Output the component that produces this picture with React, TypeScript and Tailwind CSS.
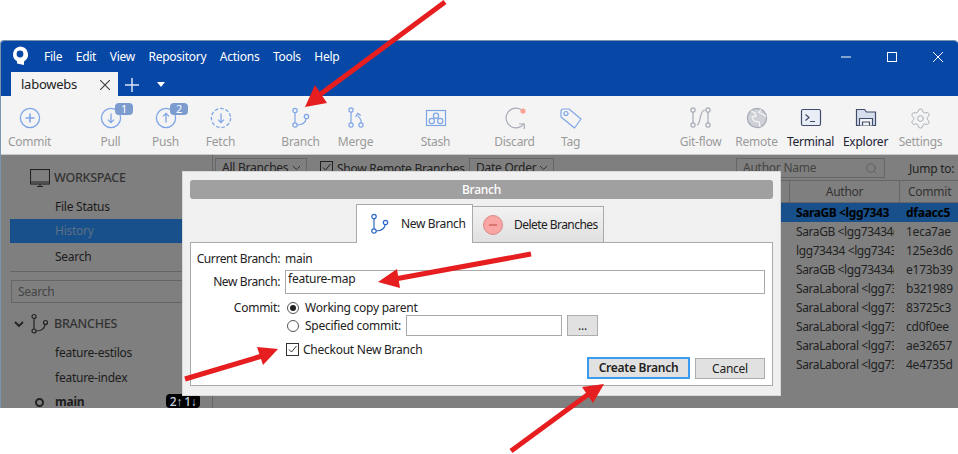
import { Search, Settings } from "lucide-react"

const blue = "#7ea6e6"
const grey = "#a6abb6"

function Logo() {
  return (
    <svg className="-mt-[1px]" width="18" height="20" viewBox="0 0 18 20">
      <path d="M9 0.5a8 8 0 0 1 4 14.9V19l-7 -1.5v-2.2A8 8 0 0 1 9 0.5z" fill="#fff" />
      <circle cx="9" cy="8" r="3.4" fill="#0747a6" />
    </svg>
  )
}

function BranchIcon({ color }: { color: string }) {
  return (
    <svg width="32" height="32" viewBox="0 0 32 32" fill="none" stroke={color} strokeWidth="1.2">
      <circle cx="10" cy="8.5" r="2.2" />
      <circle cx="10" cy="23" r="2.2" />
      <circle cx="21.5" cy="14.5" r="2.2" />
      <path d="M10 10.7V20.8M12.2 23C17 23 20.5 20.5 21.2 16.7" />
    </svg>
  )
}

function CircleIcon({ kind }: { kind: "plus" | "down" | "up" | "dash" }) {
  return (
    <svg width="32" height="32" viewBox="0 0 32 32" fill="none" stroke={blue} strokeWidth="1.3">
      <circle cx="16" cy="16" r="9.6" strokeDasharray={kind === "dash" ? "3.6 1.9" : undefined} />
      {kind === "plus" && <path d="M16 11.5v9M11.5 16h9" strokeWidth="1.6" />}
      {(kind === "down" || kind === "dash") && <path d="M16 11.5v9M13 17.6l3 3 3-3" />}
      {kind === "up" && <path d="M16 20.5v-9M13 14.4l3-3 3 3" />}
    </svg>
  )
}

function MergeIcon() {
  return (
    <svg width="32" height="32" viewBox="0 0 32 32" fill="none" stroke={blue} strokeWidth="1.2">
      <circle cx="11" cy="8" r="2.1" />
      <circle cx="11" cy="23" r="2.1" />
      <circle cx="21" cy="23" r="2.1" />
      <path d="M11 10.1v10.8M21 20.9v-2.4C21 16.5 18.5 16 18 13.5" />
      <path d="M15.6 15l2.2-3.6 3 2.2" />
    </svg>
  )
}

function StashIcon() {
  return (
    <svg width="32" height="32" viewBox="0 0 32 32" fill="none" stroke={blue} strokeWidth="1.2">
      <rect x="6.5" y="8.5" width="19" height="15" />
      <circle cx="16" cy="13.7" r="2.6" />
      <circle cx="11.8" cy="19" r="2.6" />
      <circle cx="20.2" cy="19" r="2.6" />
    </svg>
  )
}

function DiscardIcon() {
  return (
    <svg width="32" height="32" viewBox="0 0 32 32" fill="none" stroke={grey} strokeWidth="1.2">
      <path d="M22 7.6A9.8 9.8 0 1 0 25 21.5" />
      <path d="M20 22h5.3v5" />
      <circle cx="24" cy="9" r="2.6" fill="#f9a294" stroke="none" />
    </svg>
  )
}

function TagIcon() {
  return (
    <svg width="32" height="32" viewBox="0 0 32 32" fill="none" stroke={blue} strokeWidth="1.2">
      <path d="M6 9.5C6 8 7 7 8.5 7H14L26 17l-6.5 9L6 15z" strokeLinejoin="round" />
      <circle cx="11" cy="11.5" r="2" />
    </svg>
  )
}

function GitFlowIcon() {
  return (
    <svg width="32" height="32" viewBox="0 0 32 32" fill="none" stroke={grey} strokeWidth="1.2">
      <circle cx="8" cy="8" r="2.1" />
      <circle cx="8" cy="23" r="2.1" />
      <circle cx="23" cy="8" r="2.1" />
      <circle cx="23" cy="23" r="2.1" />
      <path d="M8 10.1v10.8M23 10.1v10.8M12 23c4 0 2-15 8-15" />
    </svg>
  )
}

function GlobeIcon() {
  return (
    <svg width="32" height="32" viewBox="0 0 32 32" fill="#cdd0d6" stroke={grey} strokeWidth="1.2">
      <circle cx="16" cy="16" r="9.6" />
      <path d="M10 9l4 2 1 3-4 1 2 4 5 1 1 5M20 7.5l-2 3 4 2 3 2" fill="none" stroke="#f4f4f4" strokeWidth="1.3" />
    </svg>
  )
}

function TerminalIcon() {
  return (
    <svg width="32" height="32" viewBox="0 0 32 32" fill="none" stroke="#3f4c6b" strokeWidth="1.2">
      <rect x="6.5" y="7.5" width="19" height="16" rx="1.5" fill="#e9edf5" />
      <path d="M10.5 12.5l3.5 3-3.5 3M15 19.5h5" />
    </svg>
  )
}

function ExplorerIcon() {
  return (
    <svg width="32" height="32" viewBox="0 0 32 32" fill="none" stroke="#3f4c6b" strokeWidth="1.2">
      <path d="M6.5 23.5v-16h8l2 2.5h9v13.5z" fill="#d7deeb" />
      <path d="M9.5 23.5v-7h13v7" fill="#f4f4f4" />
      <path d="M12.5 23.5v-3.5h7v3.5" />
    </svg>
  )
}

function ToolItem({ label, dark, badge, className, children }: { label: string; dark?: boolean; badge?: string; className?: string; children: React.ReactNode }) {
  return (
    <div className={`relative flex w-[55px] shrink-0 flex-col items-center pt-[6px] ${className ?? ""}`}>
      <div className="flex h-[32px] items-center justify-center">{children}</div>
      {badge && (
        <span className="absolute left-[32px] top-[7px] flex h-[12px] w-[18px] items-center justify-center rounded-[4px] bg-[#7c9bce] text-[11px] text-white">
          {badge}
        </span>
      )}
      <span className={`whitespace-nowrap text-[12px] leading-[16px] ${dark ? "text-[#1d2233]" : "text-[#9a9a9a]"}`}>{label}</span>
    </div>
  )
}

function Combo({ label, className }: { label: string; className: string }) {
  return (
    <div className={`flex h-[20px] items-center justify-between whitespace-nowrap border border-[#666] pl-[6px] pr-[5px] text-[12px] text-[#222] ${className}`}>
      <span>{label}</span>
      <svg width="9" height="6" viewBox="0 0 9 6" fill="none" stroke="#333"><path d="M1 1l3.5 3.5L8 1" /></svg>
    </div>
  )
}

const rows = [
  ["SaraGB <lgg7343", "dfaacc5"],
  ["SaraGB <lgg73434(", "1eca7ae"],
  ["lgg73434 <lgg7343", "125e3d6"],
  ["SaraGB <lgg73434(", "e173b39"],
  ["SaraLaboral <lgg73", "b321989"],
  ["SaraLaboral <lgg73", "83725c3"],
  ["SaraLaboral <lgg73", "cd0f0ee"],
  ["SaraLaboral <lgg73", "ae32657"],
  ["SaraLaboral <lgg73", "4e4735d"],
]

function Sidebar() {
  return (
    <aside className="flex w-[211px] shrink-0 flex-col pl-[9px] text-[12px] text-[#1c1c1c]">
      <div className="flex h-[44px] shrink-0 items-center gap-[4px] pl-[20px] pt-[2px]">
        <svg width="20" height="19" viewBox="0 0 20 19" fill="none" stroke="#222" strokeWidth="1.1">
          <rect x="0.5" y="0.5" width="19" height="14.5" />
          <path d="M0.5 13h19M7 17.5h6M10 15v2.5" />
        </svg>
        <span className="text-[12.5px] font-medium text-[#333]">WORKSPACE</span>
      </div>
      <div className="flex h-[16px] shrink-0 items-center pl-[45px]">File Status</div>
      <div className="mt-[4px] flex h-[24px] shrink-0 items-center bg-[#17508a] pl-[45px] text-[#5c6f85]">History</div>
      <div className="flex h-[27px] shrink-0 items-center pl-[45px]">Search</div>
      <div className="mt-[1px] h-px shrink-0 bg-[#666]" />
      <div className="ml-[1px] mt-[8px] flex h-[23px] shrink-0 items-center justify-between border border-[#666] pl-[6px] pr-[6px] text-[#444]">
        Search
        <Search size={13} strokeWidth={1.2} color="#555" />
      </div>
      <div className="mt-[9px] flex h-[24px] shrink-0 items-center">
        <span className="w-[16px] shrink-0 pl-[4px]">
          <svg width="10" height="7" viewBox="0 0 10 7" fill="none" stroke="#222" strokeWidth="1.8">
            <path d="M1 1l4 4 4-4" />
          </svg>
        </span>
        <svg className="ml-[3px]" width="24" height="24" viewBox="5 4 24 24" fill="none" stroke="#222" strokeWidth="1.2">
          <circle cx="10" cy="8.5" r="2" />
          <circle cx="10" cy="23" r="2" />
          <circle cx="21.5" cy="14.5" r="2" />
          <path d="M10 10.5V21M12 23C17 23 20.5 20.5 21.2 16.5" />
        </svg>
        <span className="ml-[1px] text-[12.5px] font-medium text-[#333]">BRANCHES</span>
      </div>
      <div className="mt-[4px] flex h-[25px] shrink-0 items-center pl-[45px]">feature-estilos</div>
      <div className="flex h-[25px] shrink-0 items-center pl-[45px]">feature-index</div>
      <div className="relative flex h-[18px] shrink-0 items-center pl-[45px] pt-[6px] font-bold">
        <span className="absolute left-[25px] top-[8px] h-[9px] w-[9px] rounded-full border-2 border-[#222]" />
        main
        <span className="absolute left-[156px] top-[4px] flex h-[14px] w-[34px] items-end justify-center whitespace-nowrap rounded-[4px] bg-black text-[12px] font-medium leading-[12px] tracking-[-0.5px] text-[#c9d4e4]">
          2↑ 1↓
        </span>
      </div>
    </aside>
  )
}

function MainPane() {
  return (
    <main className="flex min-w-0 flex-1 flex-col border-l border-[#666] text-[12px] text-[#222]">
      <div className="flex h-[26px] shrink-0 items-start whitespace-nowrap border-b border-[#666] pt-[3px]">
        <Combo label="All Branches" className="ml-[2px] w-[92px] shrink-0" />
        <span className="ml-[13px] mt-[3px] flex h-[13px] w-[13px] shrink-0 items-center justify-center border border-[#222]">
          <svg width="11" height="11" viewBox="0 0 11 11" fill="none" stroke="#222"><path d="M2 5.5l2.5 2.5L9.5 2" /></svg>
        </span>
        <span className="ml-[4px] mt-[2px] w-[120px] shrink-0">Show Remote Branches</span>
        <Combo label="Date Order" className="ml-[12px] w-[85px] shrink-0" />
        <div className="ml-[182px] flex h-[20px] w-[149px] shrink-0 items-center justify-between border border-[#666] px-[6px] text-[#444]">
          Author Name
          <Search size={13} strokeWidth={1.2} color="#555" />
        </div>
        <span className="ml-[24px] mt-[2px]">Jump to:</span>
      </div>
      <div className="flex h-[22px] shrink-0 items-center justify-end border-b border-[#666] text-[#333]">
        <div className="flex h-full w-[110px] items-center justify-center border-l border-[#666]">Author</div>
        <div className="flex h-full w-[59px] items-center border-l border-[#666] pl-[8px]">Commit</div>
      </div>
      {rows.map(([author, commit], i) => (
        <div key={commit} className={`flex h-[19px] shrink-0 items-center justify-end ${i === 0 ? "bg-[#17508a] font-bold text-black" : ""}`}>
          <div className="w-[110px] pl-[7px] pr-[5px]">
            <div className="overflow-hidden whitespace-nowrap tracking-[-0.4px]">{author}</div>
          </div>
          <div className="w-[59px] pl-[7px]">{commit}</div>
        </div>
      ))}
    </main>
  )
}

function BranchDialog() {
  return (
    <div className="absolute left-[181px] top-[130px] flex h-[225px] w-[599px] flex-col border border-[#d8d8d8] bg-[#f0f0f0] px-[7px] pt-[8px] text-[12px] text-[#222]">
      <div className="flex h-[19px] shrink-0 items-center justify-center rounded-[3px] bg-[#a0a0a0] font-medium text-white">Branch</div>
      <div className="relative z-10 mt-[5px] flex h-[39px] shrink-0 items-end pl-[166px]">
        <div className="flex h-[39px] w-[117px] items-center border border-b-0 border-[#a9a9a9] bg-white">
          <span className="ml-[7px]">
            <BranchIcon color="#2a66c8" />
          </span>
          <span className="-mt-[1px] ml-[5px] whitespace-nowrap tracking-[-0.35px]">New Branch</span>
        </div>
        <div className="flex h-[37px] w-[131px] items-center border border-l-0 border-[#a9a9a9] bg-gradient-to-b from-[#f2f2f2] to-[#e0e0e0]">
          <span className="ml-[10px] flex h-[20px] w-[20px] shrink-0 items-center justify-center rounded-full border border-[#d98a86] bg-[#f9a5a3]">
            <span className="h-[2px] w-[8px] bg-[#d9756f]" />
          </span>
          <span className="ml-[11px] whitespace-nowrap tracking-[-0.55px]">Delete Branches</span>
        </div>
      </div>
      <div className="-mt-px flex h-[144px] flex-col border border-[#a9a9a9] bg-white pr-[7px]">
        <div className="mt-[8px] flex h-[16px] shrink-0 items-center">
          <span className="w-[89px] text-right tracking-[-0.4px]">Current Branch:</span>
          <span className="ml-[5px]">main</span>
        </div>
        <div className="mt-[3px] flex h-[24px] shrink-0 items-center">
          <span className="w-[89px] text-right tracking-[-0.4px]">New Branch:</span>
          <div className="ml-[5px] h-[24px] flex-1 border border-[#a9a9a9] pl-[2px] leading-[16px]">feature-map</div>
        </div>
        <div className="mt-[6px] flex h-[15px] shrink-0 items-center">
          <span className="w-[89px] text-right">Commit:</span>
          <span className="ml-[7px] flex h-[12px] w-[12px] items-center justify-center rounded-full border border-[#555]">
            <span className="h-[6px] w-[6px] rounded-full bg-[#222]" />
          </span>
          <span className="ml-[6px]">Working copy parent</span>
        </div>
        <div className="flex h-[21px] shrink-0 items-center">
          <span className="ml-[96px] h-[12px] w-[12px] rounded-full border border-[#555]" />
          <span className="ml-[6px] w-[101px] whitespace-nowrap">Specified commit:</span>
          <div className="h-[21px] w-[156px] border border-[#a9a9a9]" />
          <div className="ml-[5px] flex h-[21px] w-[31px] items-center justify-center border border-[#adadad] bg-[#e1e1e1]">...</div>
        </div>
        <div className="ml-[95px] mt-[7px] flex h-[13px] shrink-0 items-center">
          <span className="flex h-[13px] w-[13px] items-center justify-center border border-[#333]">
            <svg width="11" height="11" viewBox="0 0 11 11" fill="none" stroke="#333" strokeWidth="1">
              <path d="M2 5.5l2.5 2.5L9.5 2" />
            </svg>
          </span>
          <span className="ml-[4px]">Checkout New Branch</span>
        </div>
        <div className="mt-[1px] flex items-start justify-end gap-[5px]">
          <div className="flex h-[22px] w-[103px] items-center justify-center border-2 border-[#3b9af2] bg-[#e1e1e1] font-semibold">Create Branch</div>
          <div className="mt-px flex h-[21px] w-[70px] items-center justify-center border border-[#adadad] bg-[#e1e1e1]">Cancel</div>
        </div>
      </div>
    </div>
  )
}

function Arrows() {
  return (
    <svg className="pointer-events-none absolute left-0 top-0" width="958" height="454" viewBox="0 0 958 454">
      <g fill="#e61e1f" stroke="#e61e1f" strokeWidth="5">
        <line x1="445" y1="2" x2="318" y2="96" />
        <polygon points="305,107 315,85 327,103" strokeWidth="0" />
        <line x1="531" y1="254" x2="395" y2="279" />
        <polygon points="378,282 397,269 400,288" strokeWidth="0" />
        <line x1="185" y1="379" x2="262" y2="356" />
        <polygon points="278,349 257,347 263,365" strokeWidth="0" />
        <line x1="511" y1="451" x2="590" y2="393" />
        <polygon points="604,384 582,387 593,403" strokeWidth="0" />
      </g>
    </svg>
  )
}

export default function App() {
  return (
    <div className="relative h-[454px] w-[958px] overflow-hidden bg-white pt-[40px] font-['Noto_Sans',sans-serif] tracking-[-0.25px]">
      <div className="relative flex h-[368px] flex-col overflow-hidden rounded-t-[4px] border-l border-t border-[#7b93ad]">
        {/* Title bar */}
        <div className="flex h-[31px] shrink-0 items-center bg-[#0747a6] pl-[10px] text-[12px] text-white">
          <Logo />
          <nav className="ml-[15px] flex gap-[13.5px]">
            <span>File</span>
            <span>Edit</span>
            <span>View</span>
            <span>Repository</span>
            <span>Actions</span>
            <span>Tools</span>
            <span>Help</span>
          </nav>
          <div className="ml-auto flex items-center gap-[36px] pr-[15px]">
            <svg width="10" height="10" viewBox="0 0 10 10" stroke="#fff"><path d="M0 5h10" /></svg>
            <svg width="10" height="10" viewBox="0 0 10 10" stroke="#fff" fill="none"><rect x="0.5" y="0.5" width="9" height="9" /></svg>
            <svg width="10" height="10" viewBox="0 0 10 10" stroke="#fff"><path d="M0 0l10 10M10 0L0 10" /></svg>
          </div>
        </div>
        {/* Tabs */}
        <div className="flex h-[24px] shrink-0 items-end bg-[#0747a6] pl-[10px]">
          <div className="flex h-[24px] w-[107px] items-center justify-between bg-[#f4f4f4] pl-[10px] pr-[8px] pt-px text-[13px] text-[#222]">
            labowebs
            <svg width="10" height="10" viewBox="0 0 10 10" stroke="#444" strokeWidth="1.2"><path d="M0 0l10 10M10 0L0 10" /></svg>
          </div>
          <svg className="mb-[4px] ml-[7px]" width="14" height="14" viewBox="0 0 14 14" stroke="#dbe4f3" strokeWidth="1.5"><path d="M7 0v14M0 7h14" /></svg>
          <svg className="mb-[9px] ml-[18px]" width="8" height="5" viewBox="0 0 8 5" fill="#fff"><path d="M0 0h8L4 5z" /></svg>
        </div>
        {/* Toolbar */}
        <div className="flex h-[59px] shrink-0 border-b border-[#c9c9c9] bg-[#f4f4f4] pl-px">
          <ToolItem label="Commit"><CircleIcon kind="plus" /></ToolItem>
          <ToolItem label="Pull" badge="1" className="ml-[26px]"><CircleIcon kind="down" /></ToolItem>
          <ToolItem label="Push" badge="2"><CircleIcon kind="up" /></ToolItem>
          <ToolItem label="Fetch"><CircleIcon kind="dash" /></ToolItem>
          <ToolItem label="Branch" className="ml-[25px]"><BranchIcon color={blue} /></ToolItem>
          <ToolItem label="Merge"><MergeIcon /></ToolItem>
          <ToolItem label="Stash" className="ml-[25px]"><StashIcon /></ToolItem>
          <ToolItem label="Discard" className="ml-[24px]"><DiscardIcon /></ToolItem>
          <ToolItem label="Tag" className="ml-px"><TagIcon /></ToolItem>
          <ToolItem label="Git-flow" className="ml-[75px]"><GitFlowIcon /></ToolItem>
          <ToolItem label="Remote" className="ml-px"><GlobeIcon /></ToolItem>
          <ToolItem label="Terminal" dark className="-ml-px"><TerminalIcon /></ToolItem>
          <ToolItem label="Explorer" dark><ExplorerIcon /></ToolItem>
          <ToolItem label="Settings"><Settings size={23} strokeWidth={1} color={grey} /></ToolItem>
        </div>
        {/* Dimmed repository view */}
        <div className="flex min-h-0 flex-1 overflow-hidden bg-[#7f7f7f]">
          <Sidebar />
          <MainPane />
        </div>
        <BranchDialog />
      </div>
      <Arrows />
    </div>
  )
}
